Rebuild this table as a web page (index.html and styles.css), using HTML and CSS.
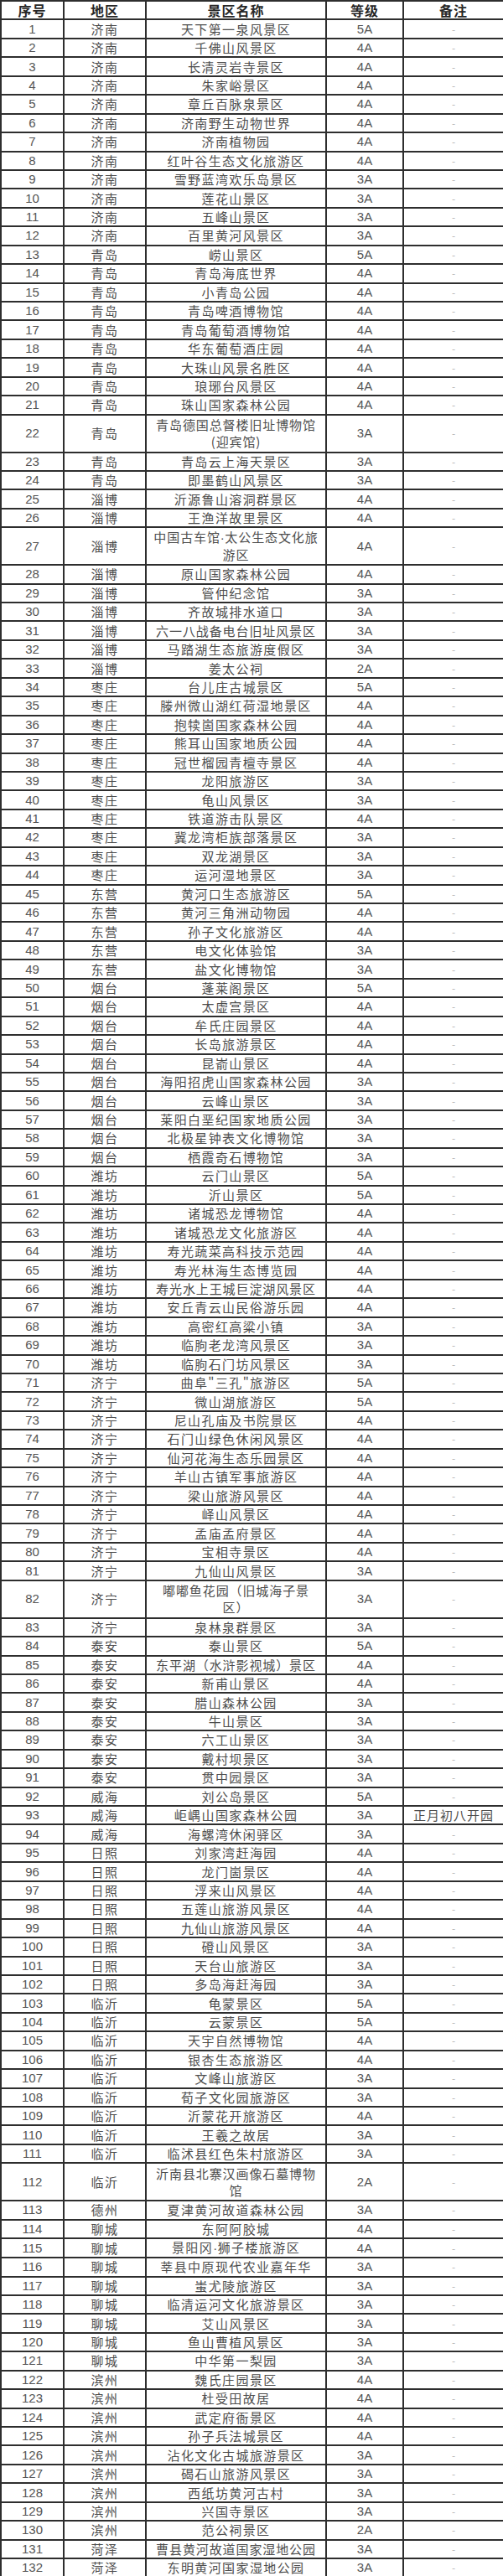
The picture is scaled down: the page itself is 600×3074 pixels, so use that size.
FILE: index.html
```html
<!DOCTYPE html>
<html lang="zh-CN">
<head>
<meta charset="utf-8">
<title>山东景区名录</title>
<link rel="stylesheet" href="styles.css">
</head>
<body>
<table class="list">
<colgroup><col class="c1"><col class="c2"><col class="c3"><col class="c4"><col class="c5"></colgroup>
<thead>
<tr><th>序号</th><th>地区</th><th>景区名称</th><th>等级</th><th>备注</th></tr>
</thead>
<tbody>
<tr><td class="no">1</td><td>济南</td><td>天下第一泉风景区</td><td class="lv">5A</td><td class="dash">-</td></tr>
<tr><td class="no">2</td><td>济南</td><td>千佛山风景区</td><td class="lv">4A</td><td class="dash">-</td></tr>
<tr><td class="no">3</td><td>济南</td><td>长清灵岩寺景区</td><td class="lv">4A</td><td class="dash">-</td></tr>
<tr><td class="no">4</td><td>济南</td><td>朱家峪景区</td><td class="lv">4A</td><td class="dash">-</td></tr>
<tr><td class="no">5</td><td>济南</td><td>章丘百脉泉景区</td><td class="lv">4A</td><td class="dash">-</td></tr>
<tr><td class="no">6</td><td>济南</td><td>济南野生动物世界</td><td class="lv">4A</td><td class="dash">-</td></tr>
<tr><td class="no">7</td><td>济南</td><td>济南植物园</td><td class="lv">4A</td><td class="dash">-</td></tr>
<tr><td class="no">8</td><td>济南</td><td>红叶谷生态文化旅游区</td><td class="lv">4A</td><td class="dash">-</td></tr>
<tr><td class="no">9</td><td>济南</td><td>雪野蓝湾欢乐岛景区</td><td class="lv">3A</td><td class="dash">-</td></tr>
<tr><td class="no">10</td><td>济南</td><td>莲花山景区</td><td class="lv">3A</td><td class="dash">-</td></tr>
<tr><td class="no">11</td><td>济南</td><td>五峰山景区</td><td class="lv">3A</td><td class="dash">-</td></tr>
<tr><td class="no">12</td><td>济南</td><td>百里黄河风景区</td><td class="lv">3A</td><td class="dash">-</td></tr>
<tr><td class="no">13</td><td>青岛</td><td>崂山景区</td><td class="lv">5A</td><td class="dash">-</td></tr>
<tr><td class="no">14</td><td>青岛</td><td>青岛海底世界</td><td class="lv">4A</td><td class="dash">-</td></tr>
<tr><td class="no">15</td><td>青岛</td><td>小青岛公园</td><td class="lv">4A</td><td class="dash">-</td></tr>
<tr><td class="no">16</td><td>青岛</td><td>青岛啤酒博物馆</td><td class="lv">4A</td><td class="dash">-</td></tr>
<tr><td class="no">17</td><td>青岛</td><td>青岛葡萄酒博物馆</td><td class="lv">4A</td><td class="dash">-</td></tr>
<tr><td class="no">18</td><td>青岛</td><td>华东葡萄酒庄园</td><td class="lv">4A</td><td class="dash">-</td></tr>
<tr><td class="no">19</td><td>青岛</td><td>大珠山风景名胜区</td><td class="lv">4A</td><td class="dash">-</td></tr>
<tr><td class="no">20</td><td>青岛</td><td>琅琊台风景区</td><td class="lv">4A</td><td class="dash">-</td></tr>
<tr><td class="no">21</td><td>青岛</td><td>珠山国家森林公园</td><td class="lv">4A</td><td class="dash">-</td></tr>
<tr class="tall"><td class="no">22</td><td>青岛</td><td class="tight">青岛德国总督楼旧址博物馆<br>(迎宾馆)</td><td class="lv">3A</td><td class="dash">-</td></tr>
<tr><td class="no">23</td><td>青岛</td><td>青岛云上海天景区</td><td class="lv">3A</td><td class="dash">-</td></tr>
<tr><td class="no">24</td><td>青岛</td><td>即墨鹤山风景区</td><td class="lv">3A</td><td class="dash">-</td></tr>
<tr><td class="no">25</td><td>淄博</td><td>沂源鲁山溶洞群景区</td><td class="lv">4A</td><td class="dash">-</td></tr>
<tr><td class="no">26</td><td>淄博</td><td>王渔洋故里景区</td><td class="lv">4A</td><td class="dash">-</td></tr>
<tr class="tall"><td class="no">27</td><td>淄博</td><td class="tight">中国古车馆<span class="dot">·</span>太公生态文化旅<br>游区</td><td class="lv">4A</td><td class="dash">-</td></tr>
<tr><td class="no">28</td><td>淄博</td><td>原山国家森林公园</td><td class="lv">4A</td><td class="dash">-</td></tr>
<tr><td class="no">29</td><td>淄博</td><td>管仲纪念馆</td><td class="lv">3A</td><td class="dash">-</td></tr>
<tr><td class="no">30</td><td>淄博</td><td>齐故城排水道口</td><td class="lv">3A</td><td class="dash">-</td></tr>
<tr><td class="no">31</td><td>淄博</td><td class="tight">六一八战备电台旧址风景区</td><td class="lv">3A</td><td class="dash">-</td></tr>
<tr><td class="no">32</td><td>淄博</td><td>马踏湖生态旅游度假区</td><td class="lv">3A</td><td class="dash">-</td></tr>
<tr><td class="no">33</td><td>淄博</td><td>姜太公祠</td><td class="lv">2A</td><td class="dash">-</td></tr>
<tr><td class="no">34</td><td>枣庄</td><td>台儿庄古城景区</td><td class="lv">5A</td><td class="dash">-</td></tr>
<tr><td class="no">35</td><td>枣庄</td><td>滕州微山湖红荷湿地景区</td><td class="lv">4A</td><td class="dash">-</td></tr>
<tr><td class="no">36</td><td>枣庄</td><td>抱犊崮国家森林公园</td><td class="lv">4A</td><td class="dash">-</td></tr>
<tr><td class="no">37</td><td>枣庄</td><td>熊耳山国家地质公园</td><td class="lv">4A</td><td class="dash">-</td></tr>
<tr><td class="no">38</td><td>枣庄</td><td>冠世榴园青檀寺景区</td><td class="lv">4A</td><td class="dash">-</td></tr>
<tr><td class="no">39</td><td>枣庄</td><td>龙阳旅游区</td><td class="lv">3A</td><td class="dash">-</td></tr>
<tr><td class="no">40</td><td>枣庄</td><td>龟山风景区</td><td class="lv">3A</td><td class="dash">-</td></tr>
<tr><td class="no">41</td><td>枣庄</td><td>铁道游击队景区</td><td class="lv">4A</td><td class="dash">-</td></tr>
<tr><td class="no">42</td><td>枣庄</td><td>冀龙湾柜族部落景区</td><td class="lv">3A</td><td class="dash">-</td></tr>
<tr><td class="no">43</td><td>枣庄</td><td>双龙湖景区</td><td class="lv">3A</td><td class="dash">-</td></tr>
<tr><td class="no">44</td><td>枣庄</td><td>运河湿地景区</td><td class="lv">3A</td><td class="dash">-</td></tr>
<tr><td class="no">45</td><td>东营</td><td>黄河口生态旅游区</td><td class="lv">5A</td><td class="dash">-</td></tr>
<tr><td class="no">46</td><td>东营</td><td>黄河三角洲动物园</td><td class="lv">4A</td><td class="dash">-</td></tr>
<tr><td class="no">47</td><td>东营</td><td>孙子文化旅游区</td><td class="lv">4A</td><td class="dash">-</td></tr>
<tr><td class="no">48</td><td>东营</td><td>电文化体验馆</td><td class="lv">3A</td><td class="dash">-</td></tr>
<tr><td class="no">49</td><td>东营</td><td>盐文化博物馆</td><td class="lv">3A</td><td class="dash">-</td></tr>
<tr><td class="no">50</td><td>烟台</td><td>蓬莱阁景区</td><td class="lv">5A</td><td class="dash">-</td></tr>
<tr><td class="no">51</td><td>烟台</td><td>太虚宫景区</td><td class="lv">4A</td><td class="dash">-</td></tr>
<tr><td class="no">52</td><td>烟台</td><td>牟氏庄园景区</td><td class="lv">4A</td><td class="dash">-</td></tr>
<tr><td class="no">53</td><td>烟台</td><td>长岛旅游景区</td><td class="lv">4A</td><td class="dash">-</td></tr>
<tr><td class="no">54</td><td>烟台</td><td>昆嵛山景区</td><td class="lv">4A</td><td class="dash">-</td></tr>
<tr><td class="no">55</td><td>烟台</td><td>海阳招虎山国家森林公园</td><td class="lv">3A</td><td class="dash">-</td></tr>
<tr><td class="no">56</td><td>烟台</td><td>云峰山景区</td><td class="lv">3A</td><td class="dash">-</td></tr>
<tr><td class="no">57</td><td>烟台</td><td>莱阳白垩纪国家地质公园</td><td class="lv">3A</td><td class="dash">-</td></tr>
<tr><td class="no">58</td><td>烟台</td><td>北极星钟表文化博物馆</td><td class="lv">3A</td><td class="dash">-</td></tr>
<tr><td class="no">59</td><td>烟台</td><td>栖霞奇石博物馆</td><td class="lv">3A</td><td class="dash">-</td></tr>
<tr><td class="no">60</td><td>潍坊</td><td>云门山景区</td><td class="lv">5A</td><td class="dash">-</td></tr>
<tr><td class="no">61</td><td>潍坊</td><td>沂山景区</td><td class="lv">5A</td><td class="dash">-</td></tr>
<tr><td class="no">62</td><td>潍坊</td><td>诸城恐龙博物馆</td><td class="lv">4A</td><td class="dash">-</td></tr>
<tr><td class="no">63</td><td>潍坊</td><td>诸城恐龙文化旅游区</td><td class="lv">4A</td><td class="dash">-</td></tr>
<tr><td class="no">64</td><td>潍坊</td><td>寿光蔬菜高科技示范园</td><td class="lv">4A</td><td class="dash">-</td></tr>
<tr><td class="no">65</td><td>潍坊</td><td>寿光林海生态博览园</td><td class="lv">4A</td><td class="dash">-</td></tr>
<tr><td class="no">66</td><td>潍坊</td><td class="tight">寿光水上王城巨淀湖风景区</td><td class="lv">4A</td><td class="dash">-</td></tr>
<tr><td class="no">67</td><td>潍坊</td><td>安丘青云山民俗游乐园</td><td class="lv">4A</td><td class="dash">-</td></tr>
<tr><td class="no">68</td><td>潍坊</td><td>高密红高粱小镇</td><td class="lv">3A</td><td class="dash">-</td></tr>
<tr><td class="no">69</td><td>潍坊</td><td>临朐老龙湾风景区</td><td class="lv">3A</td><td class="dash">-</td></tr>
<tr><td class="no">70</td><td>潍坊</td><td>临朐石门坊风景区</td><td class="lv">3A</td><td class="dash">-</td></tr>
<tr><td class="no">71</td><td>济宁</td><td>曲阜"三孔"旅游区</td><td class="lv">5A</td><td class="dash">-</td></tr>
<tr><td class="no">72</td><td>济宁</td><td>微山湖旅游区</td><td class="lv">5A</td><td class="dash">-</td></tr>
<tr><td class="no">73</td><td>济宁</td><td>尼山孔庙及书院景区</td><td class="lv">4A</td><td class="dash">-</td></tr>
<tr><td class="no">74</td><td>济宁</td><td>石门山绿色休闲风景区</td><td class="lv">4A</td><td class="dash">-</td></tr>
<tr><td class="no">75</td><td>济宁</td><td>仙河花海生态乐园景区</td><td class="lv">4A</td><td class="dash">-</td></tr>
<tr><td class="no">76</td><td>济宁</td><td>羊山古镇军事旅游区</td><td class="lv">4A</td><td class="dash">-</td></tr>
<tr><td class="no">77</td><td>济宁</td><td>梁山旅游风景区</td><td class="lv">4A</td><td class="dash">-</td></tr>
<tr><td class="no">78</td><td>济宁</td><td>峄山风景区</td><td class="lv">4A</td><td class="dash">-</td></tr>
<tr><td class="no">79</td><td>济宁</td><td>孟庙孟府景区</td><td class="lv">4A</td><td class="dash">-</td></tr>
<tr><td class="no">80</td><td>济宁</td><td>宝相寺景区</td><td class="lv">4A</td><td class="dash">-</td></tr>
<tr><td class="no">81</td><td>济宁</td><td>九仙山风景区</td><td class="lv">3A</td><td class="dash">-</td></tr>
<tr class="tall"><td class="no">82</td><td>济宁</td><td class="tight">嘟嘟鱼花园（旧城海子景<br>区）</td><td class="lv">3A</td><td class="dash">-</td></tr>
<tr><td class="no">83</td><td>济宁</td><td>泉林泉群景区</td><td class="lv">3A</td><td class="dash">-</td></tr>
<tr><td class="no">84</td><td>泰安</td><td>泰山景区</td><td class="lv">5A</td><td class="dash">-</td></tr>
<tr><td class="no">85</td><td>泰安</td><td class="tight">东平湖（水浒影视城）景区</td><td class="lv">4A</td><td class="dash">-</td></tr>
<tr><td class="no">86</td><td>泰安</td><td>新甫山景区</td><td class="lv">4A</td><td class="dash">-</td></tr>
<tr><td class="no">87</td><td>泰安</td><td>腊山森林公园</td><td class="lv">3A</td><td class="dash">-</td></tr>
<tr><td class="no">88</td><td>泰安</td><td>牛山景区</td><td class="lv">3A</td><td class="dash">-</td></tr>
<tr><td class="no">89</td><td>泰安</td><td>六工山景区</td><td class="lv">3A</td><td class="dash">-</td></tr>
<tr><td class="no">90</td><td>泰安</td><td>戴村坝景区</td><td class="lv">3A</td><td class="dash">-</td></tr>
<tr><td class="no">91</td><td>泰安</td><td>贯中园景区</td><td class="lv">3A</td><td class="dash">-</td></tr>
<tr><td class="no">92</td><td>威海</td><td>刘公岛景区</td><td class="lv">5A</td><td class="dash">-</td></tr>
<tr><td class="no">93</td><td>威海</td><td>岠嵎山国家森林公园</td><td class="lv">3A</td><td class="note">正月初八开园</td></tr>
<tr><td class="no">94</td><td>威海</td><td>海螺湾休闲驿区</td><td class="lv">3A</td><td class="dash">-</td></tr>
<tr><td class="no">95</td><td>日照</td><td>刘家湾赶海园</td><td class="lv">4A</td><td class="dash">-</td></tr>
<tr><td class="no">96</td><td>日照</td><td>龙门崮景区</td><td class="lv">4A</td><td class="dash">-</td></tr>
<tr><td class="no">97</td><td>日照</td><td>浮来山风景区</td><td class="lv">4A</td><td class="dash">-</td></tr>
<tr><td class="no">98</td><td>日照</td><td>五莲山旅游风景区</td><td class="lv">4A</td><td class="dash">-</td></tr>
<tr><td class="no">99</td><td>日照</td><td>九仙山旅游风景区</td><td class="lv">4A</td><td class="dash">-</td></tr>
<tr><td class="no">100</td><td>日照</td><td>磴山风景区</td><td class="lv">3A</td><td class="dash">-</td></tr>
<tr><td class="no">101</td><td>日照</td><td>天台山旅游区</td><td class="lv">3A</td><td class="dash">-</td></tr>
<tr><td class="no">102</td><td>日照</td><td>多岛海赶海园</td><td class="lv">3A</td><td class="dash">-</td></tr>
<tr><td class="no">103</td><td>临沂</td><td>龟蒙景区</td><td class="lv">5A</td><td class="dash">-</td></tr>
<tr><td class="no">104</td><td>临沂</td><td>云蒙景区</td><td class="lv">5A</td><td class="dash">-</td></tr>
<tr><td class="no">105</td><td>临沂</td><td>天宇自然博物馆</td><td class="lv">4A</td><td class="dash">-</td></tr>
<tr><td class="no">106</td><td>临沂</td><td>银杏生态旅游区</td><td class="lv">4A</td><td class="dash">-</td></tr>
<tr><td class="no">107</td><td>临沂</td><td>文峰山旅游区</td><td class="lv">3A</td><td class="dash">-</td></tr>
<tr><td class="no">108</td><td>临沂</td><td>荀子文化园旅游区</td><td class="lv">3A</td><td class="dash">-</td></tr>
<tr><td class="no">109</td><td>临沂</td><td>沂蒙花开旅游区</td><td class="lv">4A</td><td class="dash">-</td></tr>
<tr><td class="no">110</td><td>临沂</td><td>王羲之故居</td><td class="lv">3A</td><td class="dash">-</td></tr>
<tr><td class="no">111</td><td>临沂</td><td>临沭县红色朱村旅游区</td><td class="lv">3A</td><td class="dash">-</td></tr>
<tr class="tall"><td class="no">112</td><td>临沂</td><td class="tight">沂南县北寨汉画像石墓博物<br>馆</td><td class="lv">2A</td><td class="dash">-</td></tr>
<tr><td class="no">113</td><td>德州</td><td>夏津黄河故道森林公园</td><td class="lv">3A</td><td class="dash">-</td></tr>
<tr><td class="no">114</td><td>聊城</td><td>东阿阿胶城</td><td class="lv">4A</td><td class="dash">-</td></tr>
<tr><td class="no">115</td><td>聊城</td><td>景阳冈<span class="dot">·</span>狮子楼旅游区</td><td class="lv">4A</td><td class="dash">-</td></tr>
<tr><td class="no">116</td><td>聊城</td><td>莘县中原现代农业嘉年华</td><td class="lv">3A</td><td class="dash">-</td></tr>
<tr><td class="no">117</td><td>聊城</td><td>蚩尤陵旅游区</td><td class="lv">3A</td><td class="dash">-</td></tr>
<tr><td class="no">118</td><td>聊城</td><td>临清运河文化旅游景区</td><td class="lv">3A</td><td class="dash">-</td></tr>
<tr><td class="no">119</td><td>聊城</td><td>艾山风景区</td><td class="lv">3A</td><td class="dash">-</td></tr>
<tr><td class="no">120</td><td>聊城</td><td>鱼山曹植风景区</td><td class="lv">3A</td><td class="dash">-</td></tr>
<tr><td class="no">121</td><td>聊城</td><td>中华第一梨园</td><td class="lv">3A</td><td class="dash">-</td></tr>
<tr><td class="no">122</td><td>滨州</td><td>魏氏庄园景区</td><td class="lv">4A</td><td class="dash">-</td></tr>
<tr><td class="no">123</td><td>滨州</td><td>杜受田故居</td><td class="lv">4A</td><td class="dash">-</td></tr>
<tr><td class="no">124</td><td>滨州</td><td>武定府衙景区</td><td class="lv">4A</td><td class="dash">-</td></tr>
<tr><td class="no">125</td><td>滨州</td><td>孙子兵法城景区</td><td class="lv">4A</td><td class="dash">-</td></tr>
<tr><td class="no">126</td><td>滨州</td><td>沾化文化古城旅游景区</td><td class="lv">3A</td><td class="dash">-</td></tr>
<tr><td class="no">127</td><td>滨州</td><td>碣石山旅游风景区</td><td class="lv">3A</td><td class="dash">-</td></tr>
<tr><td class="no">128</td><td>滨州</td><td>西纸坊黄河古村</td><td class="lv">3A</td><td class="dash">-</td></tr>
<tr><td class="no">129</td><td>滨州</td><td>兴国寺景区</td><td class="lv">3A</td><td class="dash">-</td></tr>
<tr><td class="no">130</td><td>滨州</td><td>范公祠景区</td><td class="lv">2A</td><td class="dash">-</td></tr>
<tr><td class="no">131</td><td>菏泽</td><td class="tight">曹县黄河故道国家湿地公园</td><td class="lv">3A</td><td class="dash">-</td></tr>
<tr><td class="no">132</td><td>菏泽</td><td>东明黄河国家湿地公园</td><td class="lv">3A</td><td class="dash">-</td></tr>
</tbody>
</table>
</body>
</html>
```
FILE: styles.css
```css
html, body {
  margin: 0;
  padding: 0;
  background: #ffffff;
}

.list {
  width: 600px;
  table-layout: fixed;
  border-collapse: collapse;
  font-family: "Noto Sans CJK SC", "Liberation Sans", sans-serif;
  color: #4d4d4d;
}

.c1 { width: 75px; }
.c2 { width: 98px; }
.c3 { width: 215px; }
.c4 { width: 92px; }
.c5 { width: 120px; }

.list tr {
  height: 22.44px;
}

.list tr.tall {
  height: 44.88px;
}

.list th,
.list td {
  border: 2px solid #2e2e2e;
  padding: 0;
  text-align: center;
  vertical-align: middle;
  white-space: nowrap;
}

.list th {
  font-size: 16px;
  font-weight: bold;
  color: #262626;
  line-height: 18px;
  letter-spacing: 1px;
}

.list td {
  font-size: 15px;
  line-height: 20px;
  letter-spacing: 1.4px;
}

.list td.tight {
  letter-spacing: 0.9px;
}

.list .dot {
  font-family: "Liberation Sans", sans-serif;
  letter-spacing: 0.5px;
}

.list td.no,
.list td.lv {
  letter-spacing: 0;
  font-family: "Liberation Sans", "Noto Sans CJK SC", sans-serif;
  font-size: 15px;
  color: #555555;
}

.list td.dash {
  color: #b5b5b5;
  font-size: 12px;
  letter-spacing: 0;
}

.list td.note {
  letter-spacing: 1px;
  font-size: 15px;
}
```
